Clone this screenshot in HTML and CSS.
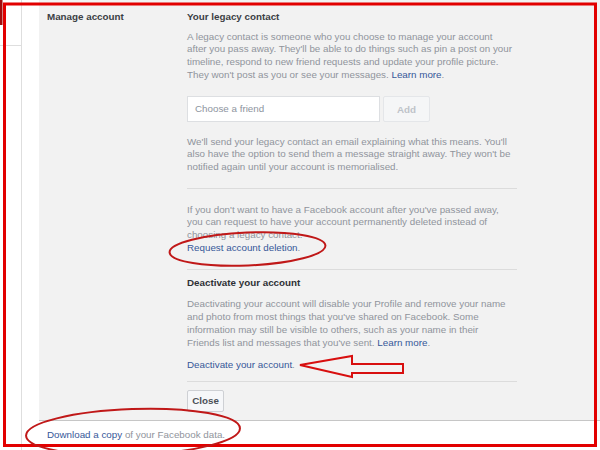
FILE: index.html
```html
<!DOCTYPE html>
<html lang="en">
<head>
<meta charset="utf-8">
<title>Manage account</title>
<link rel="stylesheet" href="styles.css">
</head>
<body>
<div class="page">
  <aside class="rail"><div class="rail-line"></div></aside>
  <div class="main">
    <section class="panel">
      <div class="label">Manage account</div>
      <div class="content">
        <h3 class="title">Your legacy contact</h3>
        <p class="text t1">A legacy contact is someone who you choose to manage your account<br>after you pass away. They'll be able to do things such as pin a post on your<br>timeline, respond to new friend requests and update your profile picture.<br>They won't post as you or see your messages. <a href="#">Learn more</a>.</p>
        <div class="picker">
          <div class="input">Choose a friend</div>
          <button class="btn btn-add" type="button">Add</button>
        </div>
        <p class="text t2">We'll send your legacy contact an email explaining what this means. You'll<br>also have the option to send them a message straight away. They won't be<br>notified again until your account is memorialised.</p>
        <hr class="rule r1">
        <p class="text t3">If you don't want to have a Facebook account after you've passed away,<br>you can request to have your account permanently deleted instead of<br>choosing a legacy contact.<br><a href="#">Request account deletion</a>.</p>
        <hr class="rule r2">
        <h3 class="title t4">Deactivate your account</h3>
        <p class="text t5">Deactivating your account will disable your Profile and remove your name<br>and photo from most things that you've shared on Facebook. Some<br>information may still be visible to others, such as your name in their<br>Friends list and messages that you've sent. <a href="#">Learn more</a>.</p>
        <p class="text t6"><a href="#">Deactivate your account</a>.</p>
        <hr class="rule r3">
        <button class="btn btn-close" type="button">Close</button>
      </div>
    </section>
    <footer class="footer"><a href="#">Download a copy</a> of your Facebook data.</footer>
  </div>
  <svg class="annot" width="600" height="450" viewBox="0 0 600 450" aria-hidden="true">
    <rect x="0" y="0" width="2.5" height="25" fill="#a30d0d"/>
    <rect x="4.5" y="4" width="591" height="441.5" fill="none" stroke="#e20000" stroke-width="3"/>
    <ellipse cx="247.5" cy="249" rx="78" ry="16.5" transform="rotate(-2.5 247.5 249)" fill="none" stroke="#c01818" stroke-width="2"/>
    <ellipse cx="133" cy="432" rx="107" ry="23" transform="rotate(-2 133 432)" fill="none" stroke="#c01818" stroke-width="2"/>
    <polygon points="300,365 352,356 352,364 403,364 403,373 352,373 352,377" fill="none" stroke="#d80f0f" stroke-width="2" stroke-linejoin="miter"/>
  </svg>
</div>
</body>
</html>
```
FILE: styles.css
```css
* { box-sizing: border-box; }
html, body { margin: 0; padding: 0; background: #fff; }
body {
  font-family: "Liberation Sans", Arial, Helvetica, sans-serif;
  font-size: 9.8px;
  line-height: 12.8px;
  color: #90949c;
}
a { color: #365899; text-decoration: none; }

.page {
  position: relative;
  width: 600px;
  height: 450px;
  overflow: hidden;
  display: flex;
}
.rail {
  width: 22px;
  height: 450px;
  border-right: 1px solid #dedede;
  padding-top: 45px;
}
.rail-line { height: 1px; background: #dedede; }

.main {
  flex: 1;
  margin-left: 17px;
  display: flex;
  flex-direction: column;
}
.panel {
  height: 420px;
  background: #f2f2f2;
  display: grid;
  grid-template-columns: 140px 330px;
  align-items: start;
  padding: 10.6px 0 0 8px;
}
.label, .title {
  font-weight: bold;
  color: #3b3e44;
  margin: 0;
  font-size: 9.8px;
  line-height: 12.8px;
}
.content { display: flex; flex-direction: column; align-items: flex-start; }
.text { margin: 0; white-space: nowrap; }
.t1 { margin-top: 7.2px; }
.picker { display: flex; gap: 3px; margin-top: 14.7px; }
.input {
  width: 193px;
  height: 26px;
  background: #fff;
  border: 1px solid #dddfe2;
  padding: 0 7px;
  line-height: 24px;
  color: #8d949e;
}
.btn {
  font-family: inherit;
  font-size: 9.8px;
  font-weight: bold;
  border-radius: 2px;
  padding: 0;
  cursor: pointer;
}
.btn-add {
  width: 47px;
  height: 26px;
  background: #f5f6f7;
  border: 1px solid #e4e6e9;
  color: #bec3c9;
}
.t2 { margin-top: 13.1px; }
.rule {
  width: 330px;
  border: 0;
  border-top: 1px solid #dcdcdc;
  margin: 0;
}
.r1 { margin-top: 14px; }
.t3 { margin-top: 14.6px; }
.r2 { margin-top: 14.2px; }
.t4 { margin-top: 7.1px; color: #2e3035; }
.t5 { margin-top: 8.7px; }
.t6 { margin-top: 9.5px; }
.r3 { margin-top: 8.6px; }
.btn-close {
  margin-top: 8.3px;
  width: 37px;
  height: 22px;
  background: #f6f7f9;
  border: 1px solid #ced0d4;
  color: #4b4f56;
}
.footer {
  border-top: 1px solid #c6c6c6;
  padding: 8.3px 0 0 8px;
}
.annot {
  position: absolute;
  left: 0;
  top: 0;
  pointer-events: none;
}
```
